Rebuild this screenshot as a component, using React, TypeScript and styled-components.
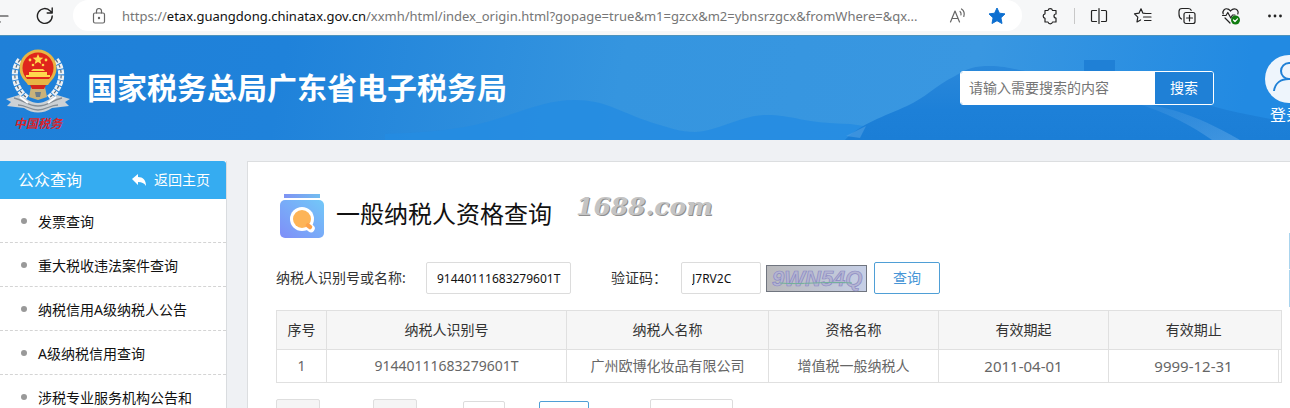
import React from "react";
import styled, { createGlobalStyle } from "styled-components";

const Global = createGlobalStyle`
  *, *::before, *::after { box-sizing: border-box; }
  body {
    margin: 0;
    overflow: hidden;
    background: #eff1f4;
    color: #333;
    font-family: "Noto Sans", "Noto Sans CJK SC", sans-serif;
    font-size: 14px;
    line-height: 20px;
  }
  button, input, select { font: inherit; color: inherit; margin: 0; }
  a { color: inherit; text-decoration: none; }
  h1, h2, ul { margin: 0; padding: 0; font-weight: 400; }
  svg { display: block; flex: none; }
`;

const Page = styled.div`
  position: relative;
  height: 100vh;
  overflow: hidden;
`;

/* browser chrome */
const BrowserBar = styled.div`
  display: flex;
  align-items: center;
  height: 36px;
  padding: 0 5px 4px 0;
  background: #f6f7f8;
  border-bottom: 1px solid #4c93bd;
`;

const NavButtons = styled.div`
  display: flex;
  align-items: center;
  gap: 26px;
  width: 73px;
`;

const IconButton = styled.button`
  display: grid;
  place-items: center;
  flex: none;
  padding: 0;
  border: 0;
  background: none;
  color: #222;
`;

const AddressBar = styled.div`
  flex: 1;
  min-width: 0;
  display: flex;
  align-items: center;
  height: 31px;
  padding: 0 16px 0 18px;
  border-radius: 16px;
  background: #fff;
`;

const Url = styled.div`
  flex: 1;
  min-width: 0;
  margin: 0 8px 0 15px;
  overflow: hidden;
  white-space: nowrap;
  font-size: 13px;
  color: #767676;
  b { font-weight: 400; color: #111; }
`;

const AddressActions = styled.div`
  display: flex;
  align-items: center;
  gap: 21px;
`;

const Toolbar = styled.div`
  display: flex;
  align-items: center;
  gap: 24px;
  padding-left: 18px;
`;

const Divider = styled.span`
  width: 1px;
  height: 16px;
  margin: 0 -10px 0 -10px;
  background: #c8c8c8;
`;

/* site header */
const SiteHeader = styled.header`
  position: relative;
  display: flex;
  align-items: center;
  height: 104px;
  padding-left: 6px;
  background: linear-gradient(100deg, #1f80d8 0%, #1f82da 22%, #3595df 48%, #3997e1 75%, #228ae2 96%);
  overflow: hidden;
`;

const Scenery = styled.svg`
  position: absolute;
  inset: 0;
  width: 100%;
  height: 100%;
`;

const Brand = styled.div`
  position: relative;
  display: flex;
  align-items: center;
  gap: 16px;
`;

const SiteName = styled.h1`
  color: #fff;
  font-size: 30px;
  line-height: 40px;
  font-weight: 700;
  white-space: nowrap;
`;

const SearchForm = styled.form`
  position: relative;
  display: flex;
  width: 254px;
  height: 34px;
  margin-left: auto;
  border: 1px solid #fff;
  border-radius: 3px;
  overflow: hidden;
`;

const SearchInput = styled.input`
  flex: 1;
  min-width: 0;
  padding: 0 8px;
  border: 0;
  background: #fff;
  &::placeholder { color: #757575; opacity: 1; }
`;

const SearchButton = styled.button`
  width: 58px;
  padding: 0;
  border: 0;
  background: #1f80d6;
  color: #fff;
`;

const Account = styled.a`
  position: relative;
  flex: none;
  display: flex;
  flex-direction: column;
  gap: 2px;
  width: 48px;
  margin: 4px -23px 0 51px;
  color: #fff;
  font-size: 16px;
  white-space: nowrap;
`;

const AccountLabel = styled.span`
  padding-left: 5px;
`;

/* body */
const Columns = styled.div`
  display: flex;
  align-items: flex-start;
  gap: 20px;
  padding-top: 21px;
`;

const Sidebar = styled.nav`
  flex: none;
  width: 227px;
  border-right: 1px solid #d9dcdf;
  background: #fff;
`;

const SidebarHead = styled.div`
  display: flex;
  align-items: center;
  justify-content: space-between;
  height: 38px;
  padding: 0 16px 0 18px;
  border-top-right-radius: 3px;
  background: #35acf1;
  color: #fff;
`;

const SidebarTitle = styled.h2`
  font-size: 16px;
`;

const BackLink = styled.a`
  display: flex;
  align-items: center;
  gap: 8px;
`;

const MenuList = styled.ul`
  list-style: none;
`;

const MenuItem = styled.li`
  height: 44px;
  padding-top: 1px;
  border-bottom: 1px dashed #d4d4d4;
`;

const MenuLink = styled.a`
  display: flex;
  align-items: center;
  gap: 11px;
  height: 44px;
  padding-left: 21px;
  color: #111;
  white-space: nowrap;
  &::before {
    content: "";
    width: 6px;
    height: 6px;
    margin-bottom: 3px;
    border-radius: 50%;
    background: #999;
  }
`;

const Panel = styled.main`
  flex: 1;
  min-width: 0;
  min-height: 600px;
  padding: 32px 8px 0 28px;
  border: 1px solid #dcdee0;
  border-right: 0;
  background: #fff;
`;

const TitleRow = styled.div`
  display: flex;
  align-items: center;
  height: 44px;
  padding-left: 4px;
`;

const PageTitle = styled.h2`
  margin: 0 24px 4px 12px;
  color: #111;
  font-size: 24px;
  line-height: 32px;
`;

const Watermark = styled.span`
  margin-bottom: 18px;
  color: #c4c4c4;
  font: italic 700 25px/30px "DejaVu Serif", serif;
  text-shadow: 1px 1px 0 #8f8f8f;
`;

const QueryForm = styled.form`
  display: flex;
  align-items: center;
  height: 32px;
  margin: 24px 0 16px;
`;

const FieldLabel = styled.label<{ $width: number }>`
  flex: none;
  width: ${(p) => p.$width}px;
  color: #333;
`;

const Field = styled.input<{ $width: number }>`
  width: ${(p) => p.$width}px;
  height: 32px;
  padding: 0 0 0 10px;
  border: 1px solid #dcdcdc;
  border-radius: 2px;
  background: #fff;
  color: #111;
  font-size: 12px;
`;

const Gap = styled.span`
  width: 40px;
`;

const Captcha = styled.svg`
  margin: 0 7px 0 5px;
`;

const QueryButton = styled.button`
  width: 66px;
  height: 32px;
  padding: 0;
  border: 1px solid #4f9fd6;
  border-radius: 2px;
  background: #fff;
  color: #4795d6;
`;

const ResultTable = styled.table`
  width: 100%;
  table-layout: fixed;
  border-collapse: collapse;
  text-align: center;
  border: 1px solid #e0e0e0;
`;

const HeadCell = styled.th`
  height: 39px;
  padding: 0;
  border: 1px solid #e0e0e0;
  background: #f6f6f6;
  color: #333;
  font-weight: 400;
  &:nth-last-child(2) { border-right: 0; }
  &:last-child { border-left: 0; }
`;

const Cell = styled.td<{ $date?: boolean }>`
  height: 33px;
  padding: 0;
  border: 1px solid #e0e0e0;
  color: #666;
  font-size: ${(p) => (p.$date ? 15 : 14)}px;
  white-space: nowrap;
`;

const Pager = styled.div`
  display: flex;
  align-items: flex-start;
  margin-top: 16px;
`;

const PageButton = styled.button`
  width: 44px;
  height: 32px;
  margin-right: 53px;
  border: 1px solid #dedede;
  border-radius: 2px;
  background: #f5f5f5;
`;

const PageInput = styled.input`
  width: 42px;
  height: 28px;
  margin: 2px 34px 0 -7px;
  border: 1px solid #dcdcdc;
  border-radius: 2px;
`;

const GoButton = styled.button`
  width: 50px;
  height: 28px;
  margin: 2px 61px 0 0;
  border: 1px solid #4f9fd6;
  border-radius: 2px;
  background: #fff;
`;

const SizeSelect = styled.select`
  width: 83px;
  height: 32px;
  border: 1px solid #dcdcdc;
  border-radius: 2px;
  background: #fff;
  appearance: none;
`;

const SideTab = styled.aside`
  position: absolute;
  top: 233px;
  right: 0;
  width: 1px;
  height: 74px;
  background: linear-gradient(#a9d4ee 36px, #fff 36px, #fff 37px, #a9d4ee 37px);
`;

const stroke = {
  fill: "none",
  stroke: "currentColor",
  strokeWidth: 1.2,
  strokeLinecap: "round" as const,
  strokeLinejoin: "round" as const,
};

const Emblem = () => (
  <svg width="65" height="88" viewBox="0 0 65 88" role="img" aria-label="中国税务">
    <g fill="none" stroke="#eef1f4" strokeWidth="6" strokeDasharray="4.500 1">
      <path d="M14 16C5 27 8 44 21 54" />
      <path d="M50 16C59 27 56 44 43 54" />
    </g>
    <g fill="none" stroke="#5d6c7a" strokeWidth="1.200" strokeDasharray="3 2.500">
      <path d="M14 16C5 27 8 44 21 54" />
      <path d="M50 16C59 27 56 44 43 54" />
    </g>
    <path d="M0 55l13-4 9 5c7 4 13 4 20 0l9-5 13 4-5 3 4 4-17 2c-9 6-19 6-28 0L1 62l4-4z" fill="#ccd1d5" />
    <path d="M8 54c10 2 14 8 24 8s14-6 24-8M12 61c8 0 12 5 20 5s12-5 20-5" fill="none" stroke="#858e96" strokeWidth="1.300" />
    <path d="M14 53l8 6M50 53l-8 6" stroke="#fff" strokeWidth="2" />
    <path d="M25 43h14l2 10-9 3-9-3z" fill="#c9b27a" />
    <circle cx="32" cy="24" r="18.500" fill="#e8b545" />
    <circle cx="32" cy="24" r="15.500" fill="#e0261c" />
    <path d="M32 10l1.500 3.500 3.800.3-2.900 2.500.9 3.700L32 18l-3.300 2 .9-3.700-2.900-2.500 3.800-.3z" fill="#ffd94d" />
    <g fill="#ffd94d">
      <circle cx="24" cy="16" r="1.400" />
      <circle cx="40" cy="16" r="1.400" />
      <circle cx="27" cy="21" r="1.300" />
      <circle cx="37" cy="21" r="1.300" />
      <path d="M25 27l2-2h10l2 2zM20 31h24v2H20zM23 28h18v3H23z" />
    </g>
    <path d="M18 35h28l-4 6H22z" fill="#e8b545" />
    <path d="M24 41h16l-2 4H26z" fill="#d3261c" />
    <path d="M29 48h6l-1 5h-4z" fill="#6d7c8a" />
    <text x="8" y="84" fill="#d8242a" fontSize="12" fontStyle="italic" fontWeight="700" fontFamily="Noto Sans CJK SC, sans-serif">中国税务</text>
  </svg>
);

const columns = [
  ["序号", 50],
  ["纳税人识别号", 240],
  ["纳税人名称", 202],
  ["资格名称", 170],
  ["有效期起", 170],
  ["有效期止", 170],
] as const;

const row = ["1", "91440111683279601T", "广州欧博化妆品有限公司", "增值税一般纳税人", "2011-04-01", "9999-12-31"];

const menu = ["发票查询", "重大税收违法案件查询", "纳税信用A级纳税人公告", "A级纳税信用查询", "涉税专业服务机构公告和"];

export default function App() {
  return (
    <Page>
      <Global />
      <BrowserBar>
        <NavButtons>
          <IconButton aria-label="后退">
            <svg width="10" height="18" viewBox="0 0 10 18" {...stroke}><path d="M-5 9H8M-5 9l5 6" /></svg>
          </IconButton>
          <IconButton aria-label="刷新">
            <svg width="18" height="18" viewBox="0 0 18 18" {...stroke} strokeWidth="1.400"><path d="M16.200 9a7.400 7.400 0 1 1-2-5.100L16 6M16.200 1v5h-5" /></svg>
          </IconButton>
        </NavButtons>
        <AddressBar>
          <svg width="16" height="18" viewBox="0 0 16 18" {...stroke} color="#666"><rect x="2.500" y="6" width="11" height="10" rx="1.500" /><path d="M5.500 6V4a2.500 2.500 0 0 1 5 0v2" /><circle cx="8" cy="11" r=".6" fill="currentColor" /></svg>
          <Url>https://<b>etax.guangdong.chinatax.gov.cn</b>/xxmh/html/index_origin.html?gopage=true&amp;m1=gzcx&amp;m2=ybnsrzgcx&amp;fromWhere=&amp;qx...</Url>
          <AddressActions>
            <IconButton aria-label="朗读">
              <svg width="18" height="18" viewBox="0 0 18 18" {...stroke} color="#666"><path d="M1.500 15L6 4l4.500 11M3 11.500h6M11 4.500c1 .8 1.300 2 1 3.500M12.500 2c2.500 1.700 3.300 4.300 2.300 7.500" /></svg>
            </IconButton>
            <IconButton aria-label="收藏">
              <svg width="18" height="18" viewBox="0 0 18 18"><path d="M9 1l2.400 5.200 5.600.7-4.100 3.900 1.100 5.700L9 13.700l-5 2.800 1.100-5.700L1 6.900l5.600-.7z" fill="#0d6fd0" stroke="#0d6fd0" strokeLinejoin="round" /></svg>
            </IconButton>
          </AddressActions>
        </AddressBar>
        <Toolbar>
          <IconButton aria-label="扩展">
            <svg width="20" height="20" viewBox="0 0 20 20" {...stroke}><path d="M5 4.500h3a2.300 2.300 0 0 1 4.500 0H16V8a2 2 0 0 0 0 4v4h-3.500a2.300 2.300 0 0 1-4.500 0H5v-3.700a2.300 2.300 0 0 1 0-4.500z" /></svg>
          </IconButton>
          <Divider />
          <IconButton aria-label="拆分窗口">
            <svg width="20" height="20" viewBox="0 0 20 20" {...stroke}><path d="M7.500 4.500h-4a1 1 0 0 0-1 1v9a1 1 0 0 0 1 1h4M12.500 4.500h4a1 1 0 0 1 1 1v9a1 1 0 0 1-1 1h-4M10 2.500v15" /></svg>
          </IconButton>
          <IconButton aria-label="收藏夹">
            <svg width="20" height="20" viewBox="0 0 20 20" {...stroke}><path d="M13 7.500l-3.200-.4L8 2.800 6 7.200l-4.500.6 3.300 3.300-.8 4.800 3.600-2M11.500 7.500H18M10.500 11H18M11.500 14.500H18" /></svg>
          </IconButton>
          <IconButton aria-label="集锦">
            <svg width="20" height="20" viewBox="0 0 20 20" {...stroke}><rect x="7" y="6.500" width="11" height="11" rx="2" /><path d="M12.500 9v6M9.500 12h6M4.500 13C2.500 12 2 10 2 8V5.500C2 3.500 3 2.500 5 2.500h6c1.700 0 2.700.7 3.200 1.800" /></svg>
          </IconButton>
          <IconButton aria-label="浏览器概要">
            <svg width="20" height="20" viewBox="0 0 20 20" {...stroke}><path d="M2.200 8C1 4.500 4 2.500 6.200 2.800 8 3 9 4.500 9.500 5c.6-.6 1.700-2.200 3.800-2.200C16 2.800 18 5 16.800 8M1.500 9.500H5L6.800 6.500l3 5.500 1.700-3H14M4 12l5 5" /><circle cx="14.500" cy="14" r="4.500" fill="#107c10" stroke="none" /><path d="M12.500 14l1.500 1.500 2.500-2.700" stroke="#fff" /></svg>
          </IconButton>
          <IconButton aria-label="更多">
            <svg width="20" height="20" viewBox="0 0 20 20" fill="#222"><circle cx="4.500" cy="10" r="1.400" /><circle cx="10" cy="10" r="1.400" /><circle cx="15.500" cy="10" r="1.400" /></svg>
          </IconButton>
        </Toolbar>
      </BrowserBar>

      <SiteHeader>
        <Scenery viewBox="0 0 1290 104" preserveAspectRatio="none" aria-hidden="true">
          <defs>
            <linearGradient id="hill" x1="0" y1="0" x2="0" y2="1"><stop offset="0" stopColor="#2a88da" /><stop offset=".6" stopColor="#1d80d8" /><stop offset="1" stopColor="#1b7ed6" /></linearGradient>
            <linearGradient id="wall" x1="0" y1="0" x2="1" y2="1"><stop offset="0" stopColor="#4a9be2" stopOpacity=".2" /><stop offset="1" stopColor="#5aa5e6" stopOpacity=".6" /></linearGradient>
          </defs>
          <path d="M385 98C440 96 470 92 500 82C530 72 550 64 575 64C605 64 620 76 650 86C670 92 680 96 695 96C715 96 740 80 765 79C795 79 800 87 850 88L960 104H385z" fill="#248ce2" opacity=".85" />
          <path d="M1084 24h31v16h-31z" fill="#1f80d6" />
          <path d="M845 104C860 88 885 80 907 70C925 62 935 50 955 40C968 32 975 30 990 30C1010 30 1020 36 1050 38H1120C1160 56 1220 76 1290 86V104z" fill="url(#hill)" />
          <path d="M846 100l20-10-6 12z" fill="#5aa5e6" opacity=".5" />
          <path d="M1132 66c30 4 60 10 108 38h-28c-20-14-45-28-80-38z" fill="url(#wall)" />
        </Scenery>
        <Brand>
          <Emblem />
          <SiteName>国家税务总局广东省电子税务局</SiteName>
        </Brand>
        <SearchForm onSubmit={(e) => e.preventDefault()}>
          <SearchInput aria-label="搜索内容" placeholder="请输入需要搜索的内容" />
          <SearchButton>搜索</SearchButton>
        </SearchForm>
        <Account href="#login">
          <svg width="48" height="48" viewBox="0 0 48 48"><circle cx="24" cy="24" r="24" fill="#eef5fc" /><g fill="none" stroke="#1f80d6" strokeWidth="2"><circle cx="24" cy="16" r="8" /><path d="M9 36c1-8 7-12 15-12s14 4 15 12" /></g></svg>
          <AccountLabel>登录</AccountLabel>
        </Account>
      </SiteHeader>

      <Columns>
        <Sidebar>
          <SidebarHead>
            <SidebarTitle>公众查询</SidebarTitle>
            <BackLink href="#home">
              <svg width="14" height="12" viewBox="0 0 14 12"><path d="M0 5l6-5v3c5 0 8 3 8 9-2-3-4-4-8-4v3z" fill="#fff" /></svg>
              返回主页
            </BackLink>
          </SidebarHead>
          <MenuList>
            {menu.map((m) => (
              <MenuItem key={m}><MenuLink href="#menu">{m}</MenuLink></MenuItem>
            ))}
          </MenuList>
        </Sidebar>

        <Panel>
          <TitleRow>
            <svg width="44" height="44" viewBox="0 0 44 44">
              <defs>
                <linearGradient id="folder" x1="0" y1="1" x2="1" y2="0"><stop offset="0" stopColor="#7f8ef8" /><stop offset="1" stopColor="#72c8f8" /></linearGradient>
                <linearGradient id="tab" x1="0" x2="1"><stop offset="0" stopColor="#7f93f4" /><stop offset="1" stopColor="#72bdf0" /></linearGradient>
              </defs>
              <path d="M4 0h36v4H4z" fill="url(#tab)" />
              <rect y="6" width="44" height="38" rx="5" fill="url(#folder)" />
              <circle cx="22" cy="25" r="12" fill="#fff" />
              <path d="M28 32l3 2.500" stroke="#fff" strokeWidth="7.500" strokeLinecap="round" />
              <circle cx="22" cy="25" r="9" fill="#fdb457" />
              <path d="M28 31.500l2 1.500" stroke="#fda24a" strokeWidth="4.500" strokeLinecap="round" />
            </svg>
            <PageTitle>一般纳税人资格查询</PageTitle>
            <Watermark>1688.com</Watermark>
          </TitleRow>

          <QueryForm onSubmit={(e) => e.preventDefault()}>
            <FieldLabel htmlFor="taxpayer" $width={150}>纳税人识别号或名称:</FieldLabel>
            <Field id="taxpayer" $width={145} defaultValue="91440111683279601T" />
            <Gap />
            <FieldLabel htmlFor="code" $width={70}>验证码：</FieldLabel>
            <Field id="code" $width={80} defaultValue="J7RV2C" />
            <Captcha width="101" height="27" viewBox="0 0 101 27" role="img" aria-label="验证码图片">
              <defs><linearGradient id="cap"><stop offset="0" stopColor="#b9b9bb" /><stop offset="1" stopColor="#c6cfe6" /></linearGradient></defs>
              <rect x=".5" y=".5" width="100" height="26" fill="url(#cap)" stroke="#70757f" />
              <text x="6" y="21" fill="#b4b5d2" stroke="#8c8ac4" strokeWidth=".7" fontSize="22" fontWeight="700" fontStyle="italic" fontFamily="Liberation Sans, sans-serif">9WN54Q</text>
              <path d="M14 18c20 2 45-2 72 0" fill="none" stroke="#72b09a" />
            </Captcha>
            <QueryButton>查询</QueryButton>
          </QueryForm>

          <ResultTable>
            <colgroup>
              {columns.map(([name, width]) => <col key={name} width={width} />)}
              <col width={3} />
            </colgroup>
            <thead>
              <tr>
                {columns.map(([name]) => <HeadCell key={name} scope="col">{name}</HeadCell>)}
                <HeadCell as="td" />
              </tr>
            </thead>
            <tbody>
              <tr>
                {row.map((v, i) => <Cell key={v} $date={i > 3}>{v}</Cell>)}
                <Cell />
              </tr>
            </tbody>
          </ResultTable>

          <Pager>
            <PageButton aria-label="上一页" />
            <PageButton aria-label="下一页" />
            <PageInput aria-label="页码" />
            <GoButton aria-label="跳转" />
            <SizeSelect aria-label="每页条数" />
          </Pager>
        </Panel>
      </Columns>
      <SideTab />
    </Page>
  );
}
